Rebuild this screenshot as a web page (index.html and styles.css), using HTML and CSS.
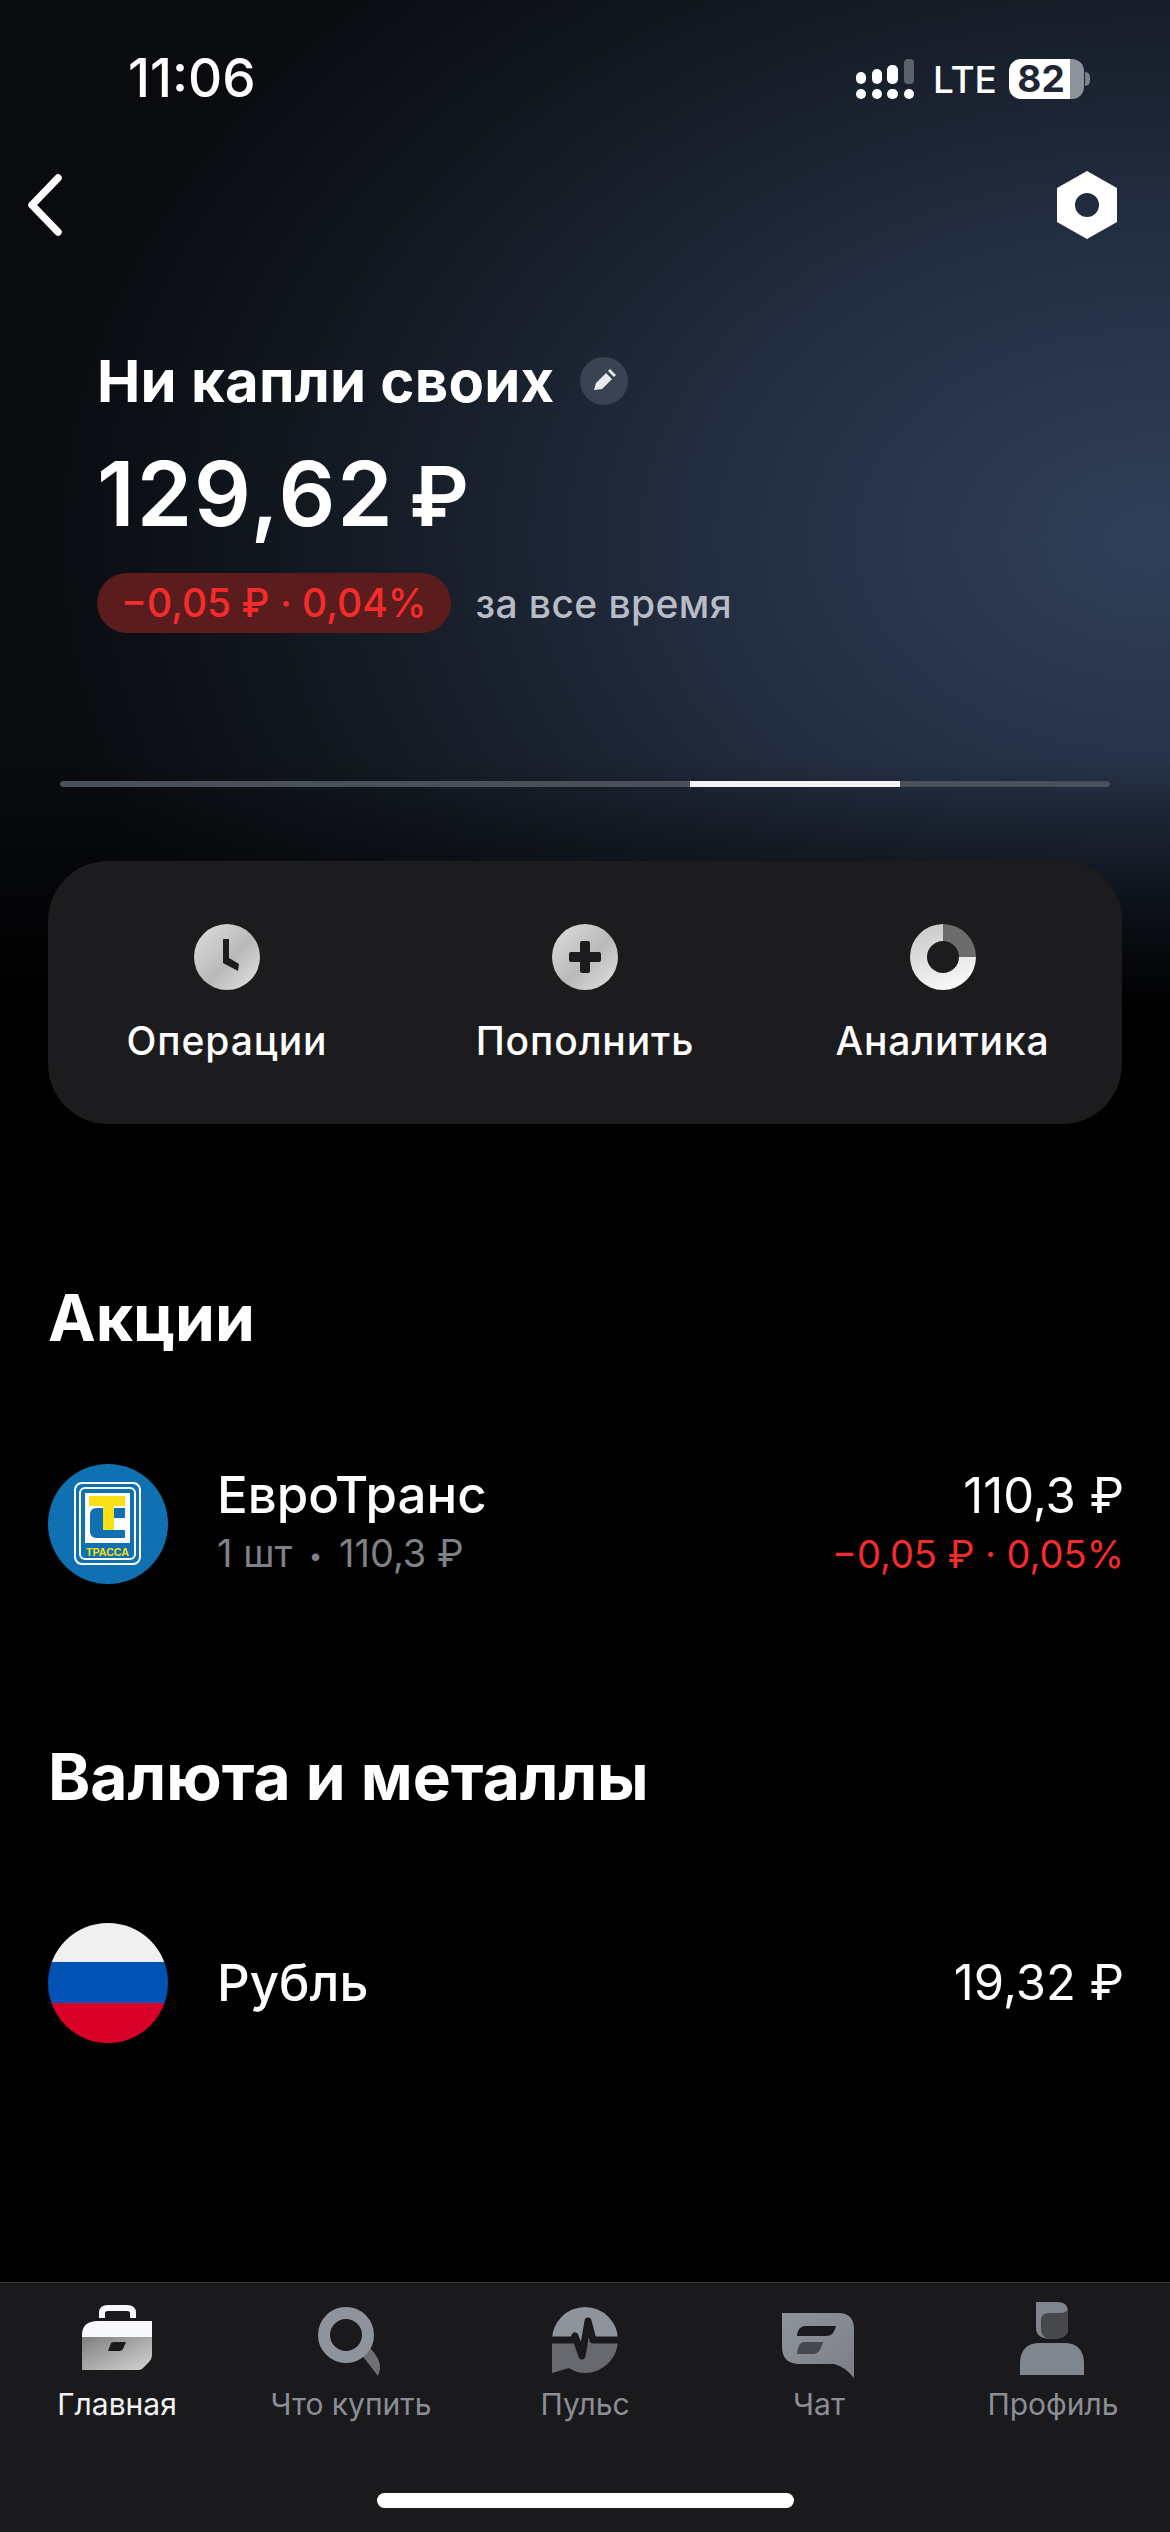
FILE: index.html
```html
<!DOCTYPE html>
<html>
<head>
	<meta name="viewport" content="width=device-width, initial-scale=1">
	<title>Ни капли своих</title>
	<link rel="stylesheet" href="styles.css">
</head>
<body>

<div class="status-bar">
	<span class="status-time">11:06</span>
	<div class="status-right">
		<svg class="signal" width="58" height="40" viewBox="0 0 58 40">
			<g fill="#fff">
				<rect x="0" y="13" width="10" height="12" rx="5"/>
				<rect x="16" y="10" width="10" height="15" rx="5"/>
				<rect x="31" y="6" width="11" height="19" rx="5"/>
				<rect x="0" y="30" width="10" height="10" rx="5"/>
				<rect x="16" y="30" width="10" height="10" rx="5"/>
				<rect x="31" y="30" width="11" height="10" rx="5"/>
				<rect x="48" y="30" width="10" height="10" rx="5"/>
			</g>
			<rect x="48" y="0" width="10" height="25" rx="4" fill="#5c626c"/>
		</svg>
		<span class="status-lte">LTE</span>
		<div class="battery">82</div>
	</div>
</div>

<div class="nav-bar">
	<svg width="36" height="62" viewBox="0 0 36 62">
		<path d="M32 4 L6 31 L32 58" fill="none" stroke="#fff" stroke-width="7.5" stroke-linecap="round" stroke-linejoin="round"/>
	</svg>
	<svg width="62" height="68" viewBox="0 0 62 68">
		<path d="M31 0 L61 17 V51 L31 68 L1 51 V17 Z M31 22 A12 12 0 1 0 31 46 A12 12 0 1 0 31 22 Z" fill="#fff" fill-rule="evenodd"/>
	</svg>
</div>

<div class="summary">
	<div class="summary-title">
		<span>Ни капли своих</span>
		<span class="edit-btn">
			<svg width="24" height="24" viewBox="0 0 24 24">
				<path d="M2 21 L4 14 L14 4 L20 10 L10 20 Z M16 2 L18 0 L24 6 L22 8 Z" fill="#e8eaee"/>
			</svg>
		</span>
	</div>
	<div class="summary-amount">129,62 <span class="amount-sign">₽</span></div>
	<div class="summary-change">
		<span class="change-pill">−0,05 ₽ · 0,04%</span>
		<span class="change-period">за все время</span>
	</div>
</div>

<div class="progress">
	<div class="progress-part"></div>
	<div class="progress-part active"></div>
	<div class="progress-part last"></div>
</div>

<div class="actions">
	<div class="action">
		<svg width="66" height="66" viewBox="0 0 66 66">
			<defs>
				<linearGradient id="metal" x1="0" y1="0" x2="1" y2="1">
					<stop offset="0" stop-color="#dedede"/>
					<stop offset="0.55" stop-color="#b9b9b9"/>
					<stop offset="1" stop-color="#e6e6e6"/>
				</linearGradient>
				<linearGradient id="metal2" x1="0" y1="0" x2="0.4" y2="1">
					<stop offset="0" stop-color="#c4c4c4"/>
					<stop offset="1" stop-color="#f6f6f6"/>
				</linearGradient>
			</defs>
			<circle cx="33" cy="33" r="33" fill="url(#metal)"/>
			<path d="M29 15 H35 V34 L45 40 L44 47 L29 39 Z" fill="#1c1c1e"/>
		</svg>
		<span>Операции</span>
	</div>
	<div class="action">
		<svg width="66" height="66" viewBox="0 0 66 66">
			<circle cx="33" cy="33" r="33" fill="url(#metal)"/>
			<path d="M28 19 a2 2 0 0 1 2 -2 h6 a2 2 0 0 1 2 2 v9 h9 a2 2 0 0 1 2 2 v6 a2 2 0 0 1 -2 2 h-9 v9 a2 2 0 0 1 -2 2 h-6 a2 2 0 0 1 -2 -2 v-9 h-9 a2 2 0 0 1 -2 -2 v-6 a2 2 0 0 1 2 -2 h9 Z" fill="#1c1c1e"/>
		</svg>
		<span>Пополнить</span>
	</div>
	<div class="action">
		<svg width="66" height="66" viewBox="0 0 66 66">
			<path d="M33 0 A33 33 0 1 0 66 33 H49 A16 16 0 1 1 33 17 Z" fill="url(#metal2)"/>
			<path d="M33 0 A33 33 0 0 1 66 33 H49 A16 16 0 0 0 33 17 Z" fill="#6c6c6c"/>
		</svg>
		<span>Аналитика</span>
	</div>
</div>

<h2 class="section-title first">Акции</h2>
<div class="asset">
	<svg class="asset-logo" width="120" height="120" viewBox="0 0 120 120">
		<circle cx="60" cy="60" r="60" fill="#0f71b1"/>
		<rect x="27" y="19" width="65" height="81" rx="7" fill="none" stroke="#fff" stroke-width="2"/>
		<rect x="32" y="24" width="55" height="71" rx="5" fill="none" stroke="#fff" stroke-width="2"/>
		<rect x="37" y="29" width="45" height="50" fill="#fff"/>
		<path d="M42 50 a6 6 0 0 1 6 -6 h7 v22 h22 v8 h-29 a6 6 0 0 1 -6 -6 Z M66 44 h11 v10 h-11 Z" fill="#0f71b1"/>
		<path d="M41 32 H77 V42 H66 V66 H55 V42 H41 Z" fill="#f8e014"/>
		<text class="logo-text" x="38" y="92" textLength="43" lengthAdjust="spacingAndGlyphs">ТРАССА</text>
	</svg>
	<div class="asset-info">
		<span class="asset-name">ЕвроТранс</span>
		<span class="asset-sub">1 шт <i class="sep">•</i> 110,3 ₽</span>
	</div>
	<div class="asset-values">
		<span class="asset-name light">110,3 ₽</span>
		<span class="asset-loss">−0,05 ₽ · 0,05%</span>
	</div>
</div>

<h2 class="section-title second">Валюта и металлы</h2>
<div class="asset">
	<svg class="asset-logo" width="120" height="120" viewBox="0 0 120 120">
		<defs>
			<clipPath id="flag-clip"><circle cx="60" cy="60" r="60"/></clipPath>
		</defs>
		<g clip-path="url(#flag-clip)">
			<rect width="120" height="40" fill="#f0f0f0"/>
			<rect y="39" width="120" height="42" fill="#0052b4"/>
			<rect y="80" width="120" height="40" fill="#d80027"/>
		</g>
	</svg>
	<div class="asset-info">
		<span class="asset-name">Рубль</span>
	</div>
	<div class="asset-values">
		<span class="asset-name light">19,32 ₽</span>
	</div>
</div>

<div class="tab-bar">
	<div class="tabs">
		<div class="tab current">
			<svg width="84" height="84" viewBox="0 0 84 84">
				<defs>
					<linearGradient id="case-fill" x1="0" y1="0" x2="1" y2="1">
						<stop offset="0" stop-color="#7f7f7f"/>
						<stop offset="1" stop-color="#d4d4d4"/>
					</linearGradient>
					<linearGradient id="chat-fill" x1="0" y1="0" x2="1" y2="1">
						<stop offset="0" stop-color="#8f949c"/>
						<stop offset="1" stop-color="#7c7f85"/>
					</linearGradient>
				</defs>
				<g transform="translate(7 7)">
					<path d="M20 13 V8 Q20 3 26 3 H45 Q51 3 51 8 V13" fill="none" stroke="#f7f8fa" stroke-width="6"/>
					<path d="M0 32 V30 Q0 16 16 16 H70 V32 Z" fill="#f7f8fa"/>
					<path d="M0 32 H70 V50 Q70 54 67 57 L62 62 Q60 65 56 65 H0 Z" fill="url(#case-fill)"/>
					<path d="M29 38 Q30 37 33 37 H44 L41 44 Q40 46 37 46 H26 Z" fill="#1a1a1c"/>
				</g>
			</svg>
			<span>Главная</span>
		</div>
		<div class="tab">
			<svg width="84" height="84" viewBox="0 0 84 84">
				<g transform="translate(9 9)">
					<path d="M43 47 L52 41 Q63 52 62 62 L60 69 Z" fill="#6e7075"/>
					<circle cx="28" cy="28" r="22" fill="none" stroke="#8f949c" stroke-width="12"/>
				</g>
			</svg>
			<span>Что купить</span>
		</div>
		<div class="tab">
			<svg width="84" height="84" viewBox="0 0 84 84">
				<g transform="translate(9 9)">
					<path d="M0 33 A33 33 0 0 1 66 33 Z" fill="#8f949c"/>
					<path d="M0 33 H66 A33 33 0 0 1 33 66 Q24 66 17 61 L0 66 Z" fill="#67696e"/>
					<path d="M0 33 H21 L23 29 L30 49 L36 14 L41 33 H66" fill="none" stroke="#1a1a1c" stroke-width="7" stroke-linejoin="round"/>
				</g>
			</svg>
			<span>Пульс</span>
		</div>
		<div class="tab">
			<svg width="84" height="84" viewBox="0 0 84 84">
				<g transform="translate(5 15)">
					<path d="M0 0 H56 Q72 0 72 16 V65 Q62 53 52 51 H18 Q0 51 0 34 Z" fill="url(#chat-fill)"/>
					<path d="M23 13 H54 Q52 23 44 23 H15 Q16 13 23 13 Z" fill="#1a1a1c"/>
					<path d="M22 29 H41 Q38 41 32 41 H15 Q16 29 22 29 Z" fill="#47484d"/>
				</g>
			</svg>
			<span>Чат</span>
		</div>
		<div class="tab">
			<svg width="84" height="84" viewBox="0 0 84 84">
				<g transform="translate(9 4)">
					<path d="M16 0 H38 Q48 0 48 10 V26 Q48 37 32 37 Q16 37 16 26 Z" fill="#7f848c"/>
					<path d="M21 26 V18 Q21 11 29 11 H40 Q48 11 48 5 V26 Q48 37 32 37 Q21 37 21 26 Z" fill="#47484c"/>
					<path d="M0 73 V62 Q0 41 20 41 H44 Q64 41 64 62 V73 Z" fill="#7f868e"/>
				</g>
			</svg>
			<span>Профиль</span>
		</div>
	</div>
	<div class="home-indicator"></div>
</div>

</body>
</html>
```

FILE: styles.css
```css
* {
	box-sizing: border-box;
}

html, body {
	margin: 0;
	padding: 0;
}

body {
	display: flex;
	flex-direction: column;
	width: 1170px;
	height: 2532px;
	overflow: hidden;
	font-family: Inter, "Noto Sans", sans-serif;
	color: white;
	background:
		linear-gradient(to bottom, rgba(0, 0, 0, 0) 760px, #000 1010px),
		radial-gradient(ellipse 1120px 800px at 1150px 540px, #303f59 0, #222d40 40%, #12171f 78%, #090b0f 100%);
	background-color: #000;
}

/* Status bar */
.status-bar {
	display: flex;
	justify-content: space-between;
	align-items: center;
	height: 156px;
	padding: 0 86px 0 128px;
}

.status-time {
	font-size: 53px;
	font-weight: 500;
}

.status-right {
	display: flex;
	align-items: center;
	margin-top: 2px;
}

.status-lte {
	width: 57px;
	margin: 0 19px 0 19px;
	font-size: 37px;
	font-weight: 500;
}

.battery {
	position: relative;
	width: 75px;
	height: 40px;
	border-radius: 12px;
	padding-right: 11px;
	color: #1e2635;
	font-size: 37px;
	font-weight: 700;
	line-height: 40px;
	text-align: center;
	background: linear-gradient(to right, #fff 82%, #8e939b 82%);
}

/* the little cap on the battery */
.battery::after {
	content: "";
	position: absolute;
	right: -6px;
	top: 13px;
	width: 5px;
	height: 14px;
	border-radius: 0 7px 7px 0;
	background: #7d838c;
}

/* Top navigation */
.nav-bar {
	display: flex;
	justify-content: space-between;
	align-items: center;
	height: 98px;
	padding: 0 52px 0 26px;
}

/* Portfolio summary */
.summary {
	padding: 92px 0 0 97px;
}

.summary-title {
	display: flex;
	align-items: center;
	height: 70px;
	font-size: 58px;
	font-weight: 700;
	letter-spacing: 0.25px;
}

.edit-btn {
	display: flex;
	justify-content: center;
	align-items: center;
	width: 48px;
	height: 48px;
	margin-left: 25px;
	border-radius: 50%;
	background: #3a4352;
}

.summary-amount {
	height: 100px;
	margin-top: 28px;
	font-size: 89px;
	font-weight: 600;
	line-height: 100px;
	letter-spacing: 2px;
	word-spacing: -10px;
}

.amount-sign {
	font-size: 82px;
	line-height: 1;
	letter-spacing: 0;
}

.summary-change {
	display: flex;
	align-items: center;
	margin-top: 29px;
}

.change-pill {
	height: 60px;
	padding: 0 24px;
	border-radius: 30px;
	color: #f62c2c;
	font-size: 39px;
	font-weight: 500;
	line-height: 60px;
	background: #5b1c1e;
}

.change-period {
	margin-left: 25px;
	color: #b8bcc6;
	font-size: 39px;
	font-weight: 500;
	letter-spacing: 0.4px;
}

/* Slide indicator */
.progress {
	display: flex;
	height: 6px;
	margin: 148px 60px 0 60px;
	border-radius: 3px;
	overflow: hidden;
	background: #4a505a;
}

.progress-part {
	width: 630px;
}

.progress-part.active {
	width: 210px;
	background: #f2f3f5;
}

.progress-part.last {
	flex: 1;
}

/* Action card */
.actions {
	display: grid;
	grid-template-columns: 358px 358px 357px;
	height: 263px;
	margin: 74px 48px 0 48px;
	padding-top: 63px;
	border-radius: 60px;
	background: #1c1c1e;
}

.action {
	display: flex;
	flex-direction: column;
	align-items: center;
	font-size: 39px;
	font-weight: 500;
	letter-spacing: 0.9px;
}

.action span {
	margin-top: 28px;
	line-height: 46px;
}

/* Asset lists */
.section-title {
	margin: 0;
	padding-left: 48px;
	font-size: 64px;
	font-weight: 700;
	line-height: 80px;
}

.section-title.first {
	margin-top: 154px;
}

.section-title.second {
	margin-top: 153px;
}

.asset {
	display: flex;
	align-items: center;
	height: 120px;
	margin: 106px 46px 0 48px;
}

.asset-logo {
	flex: none;
}

.logo-text {
	fill: #f8e014;
	font-family: "Liberation Sans", sans-serif;
	font-size: 10.5px;
	font-weight: 700;
}

.asset-info {
	display: flex;
	flex-direction: column;
	flex: 1;
	margin-left: 49px;
}

.asset-values {
	display: flex;
	flex-direction: column;
	align-items: flex-end;
}

.asset-name {
	font-size: 51px;
	font-weight: 500;
	line-height: 60px;
}

.asset-name.light {
	font-size: 49px;
	font-weight: 400;
}

.asset-sub {
	color: #7f8187;
	font-size: 38px;
	line-height: 56px;
}

.asset-sub .sep {
	font-style: normal;
	font-size: 24px;
	vertical-align: 3px;
	margin: 0 6px;
}

.asset-loss {
	color: #f62c2c;
	font-size: 38px;
	line-height: 56px;
}

/* Bottom tab bar */
.tab-bar {
	margin-top: auto;
	height: 250px;
	padding-top: 15px;
	border-top: 1px solid #38383a;
	background: #1a1a1c;
}

.tabs {
	display: grid;
	grid-template-columns: repeat(5, 234px);
}

.tab {
	display: flex;
	flex-direction: column;
	align-items: center;
	color: #8b8e94;
	font-size: 30px;
}

.tab span {
	margin-top: 2px;
	line-height: 40px;
}

.tab.current {
	color: #f2f3f5;
}

.home-indicator {
	width: 417px;
	height: 15px;
	margin: 69px auto 0 auto;
	border-radius: 8px;
	background: #fff;
}
```
